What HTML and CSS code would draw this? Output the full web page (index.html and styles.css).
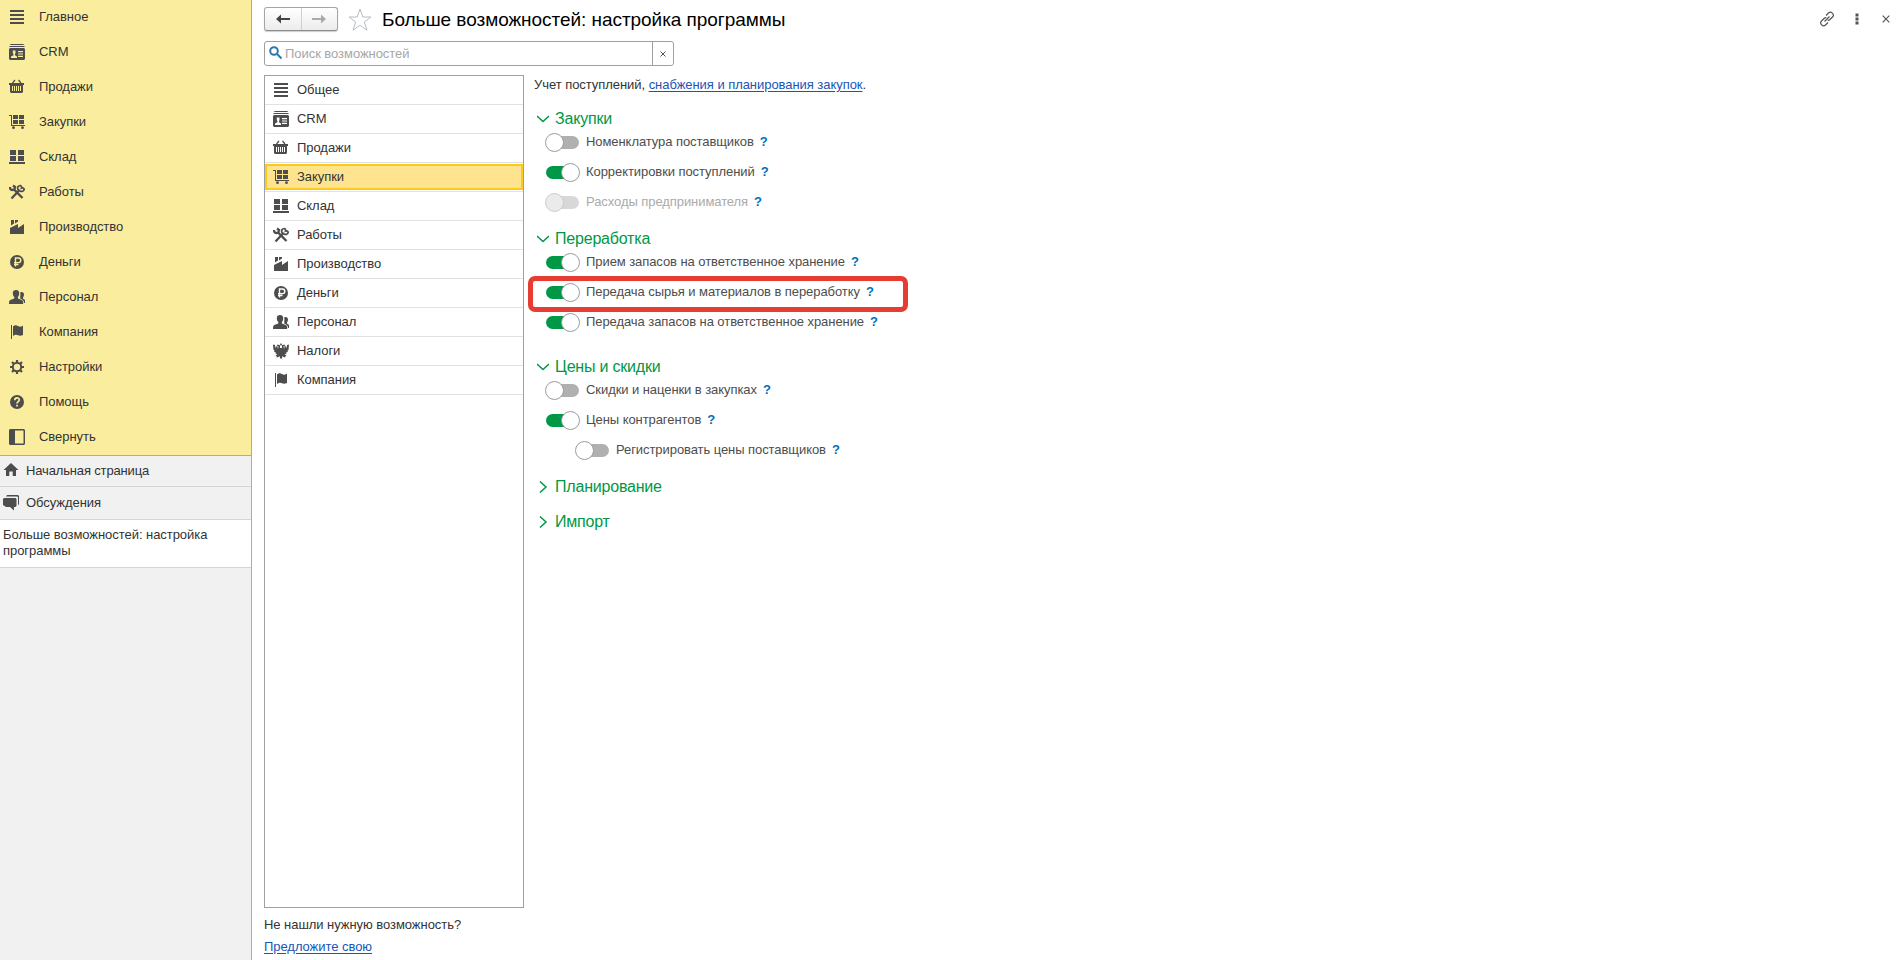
FILE: index.html
```html
<!DOCTYPE html>
<html lang="ru">
<head>
    <meta charset="UTF-8">
    <meta name="viewport" content="width=device-width, initial-scale=1.0">
    <title>Больше возможностей: настройка программы</title>
    <link rel="stylesheet" href="styles.css">
</head>
<body>
    <svg class="sprite" width="0" height="0">
        <symbol id="i-menu" viewBox="0 0 16 16"><path d="M1 1h14v2H1zM1 5h14v2H1zM1 9h14v2H1zM1 13h14v2H1z"/></symbol>
        <symbol id="i-crm" viewBox="0 0 16 16"><path d="M2 0h12l1.500 1H.5zM1 2h14l1 1H0z"/><path fill-rule="evenodd" d="M1 4h14l1 1v10l-1 1H1l-1-1V5zM3.800 6.500v2.500l.7 1.200v1L2 12.500V14h6v-1.500L6 11.200v-1L6.500 9V6.500zM9 7v1.200h5V7zM9 9.400v1.200h5V9.400zM9 11.800V13h5v-1.200z"/></symbol>
        <symbol id="i-basket" viewBox="0 0 16 16"><path d="M3.500 4l2.500-3M12 4L9.500 1" fill="none" stroke="currentColor" stroke-width="1.200"/><path fill-rule="evenodd" d="M0 4h15v2h-1v7l-1 1H2l-1-1V6H0zM3 7v5h1V7zM5 7v5h1V7zM7 7v5h1V7zM9 7v5h1V7zM11 7v5h1V7z"/></symbol>
        <symbol id="i-cart" viewBox="0 0 16 16"><path d="M0 1h3v10h13v1H2V2H0zM4 1h5v4H4zM10 1h5v4h-5zM4 6h5v4H4zM10 6h5v4h-5z"/><circle cx="4.500" cy="13.700" r="1.400"/><circle cx="13.500" cy="13.700" r="1.400"/></symbol>
        <symbol id="i-stock" viewBox="0 0 16 16"><path d="M1 1h6v5H1zM9 1h6v5H9zM1 7h6v5H1zM9 7h6v5H9zM0 13h16v2H0z"/></symbol>
        <symbol id="i-tools" viewBox="0 0 16 16"><path d="M1 3c0 3 2 3.500 4 2.500L13.500 14M4 1.500L6 3 5.500 5" fill="none" stroke="currentColor" stroke-width="2.300"/><path d="M10 6.500L2.500 14.500" fill="none" stroke="currentColor" stroke-width="2.300"/><path d="M9 5.500c-1-2 .2-4 2.300-4 1.200.6 1.600 1.400 1.200 2.500 1.300-.5 2.200 0 2.700 1.200-.2 2-2.400 2.800-4.200 1.800z" fill="none" stroke="currentColor" stroke-width="1.700"/></symbol>
        <symbol id="i-factory" viewBox="0 0 16 16"><path d="M2 1h3v3.500L2 6.500zM6 1h3v1.500L6 4.500zM1 9l8-4v4l6-4v10H1z"/></symbol>
        <symbol id="i-money" viewBox="0 0 16 16"><circle cx="8" cy="8" r="7"/><path class="cut" d="M6.500 12.500V4h3a2.300 2.300 0 0 1 0 4.600H5M5 10.500h4.500" fill="none" stroke-width="1.400"/></symbol>
        <symbol id="i-people" viewBox="0 0 16 16"><path d="M3.800 4C3.800 2 5 1 7 1s3.200 1 3.200 3c0 2-.5 3-1.300 4v1.500l4 1.500c1 .5 1.300 1.500 1.300 4H0c0-2.500.3-3.500 1.300-4l4-1.500V8C4.300 7 3.800 6 3.800 4z"/><path d="M11.200 3.500c2-1 3.800 0 3.800 2 0 1.500-.6 2.200-1 3v1l2 1.500v3h-1c-.2-2.500-1.300-3.500-3.700-4.200V8.500c-.3-1 .5-3-.1-5z"/></symbol>
        <symbol id="i-flag" viewBox="0 0 16 16"><path d="M2 1h1v14H2zM4 2.500C6 .5 7.500 1 9 2s3 1 5-.5V11c-2 1-3.500 1-5 .3S6 10.500 4 12z"/></symbol>
        <symbol id="i-gear" viewBox="0 0 16 16"><circle cx="8" cy="8" r="4.200" fill="none" stroke="currentColor" stroke-width="2"/><path d="M8 1v3M8 12v3M1 8h3M12 8h3M3 3l2.200 2.200M10.800 10.800L13 13M13 3l-2.200 2.200M5.200 10.800L3 13" stroke="currentColor" stroke-width="2.200"/></symbol>
        <symbol id="i-help" viewBox="0 0 16 16"><circle cx="8" cy="8" r="7"/><path class="cut" d="M5.800 6.200C5.800 3 10.300 3.200 10.300 5.800 10.300 7.500 8 7.600 8 9.500M8 10.800v1.800" fill="none" stroke-width="1.700"/></symbol>
        <symbol id="i-collapse" viewBox="0 0 16 16"><path fill-rule="evenodd" d="M1 0h14l1 1v14l-1 1H1l-1-1V1zM6 1.500v13h8.500v-13z"/></symbol>
        <symbol id="i-eagle" viewBox="0 0 16 16"><path d="M8 0l1 1.500L8 3 7 1.500zM4.500 1.500L7 2.300V5h2V2.300l2.500-.8.500 1.500-1.500.3L11 6l1-3.500L13.500 5 14 2l2-.5-.5 5.500-1 .5.300 1.500-1.800.5.500 1.500-2-.3 2 2.300-1.500.5.300 1-1.800-.5L9.500 13 9 15l-1 1-1-1-.5-2-1 1-1.800.5.300-1L2.500 13l2-2.300-2 .3L3 9.500 1.200 9l.3-1.500-1-.5L0 1.500 2 2l.5 3L4 2.500 5 6l.5-2.700L4 3z"/></symbol>
        <symbol id="i-home" viewBox="0 0 16 16"><path d="M8 1l7.500 7H13v6H9.700V9.500H6.300V14H3V8H.5z"/></symbol>
        <symbol id="i-chat" viewBox="0 0 16 16"><path d="M4 0h11l1 1v8l-1 1.500V2L14 1.500H3zM1 3h11.500l1 1v7l-1 1H11v3.500L7 12H3L0 10V4z"/></symbol>
    </svg>

    <aside class="sidebar">
        <nav class="main-menu">
            <a class="menu-item"><svg class="icon"><use href="#i-menu"/></svg>Главное</a>
            <a class="menu-item"><svg class="icon"><use href="#i-crm"/></svg>CRM</a>
            <a class="menu-item"><svg class="icon"><use href="#i-basket"/></svg>Продажи</a>
            <a class="menu-item"><svg class="icon"><use href="#i-cart"/></svg>Закупки</a>
            <a class="menu-item"><svg class="icon"><use href="#i-stock"/></svg>Склад</a>
            <a class="menu-item"><svg class="icon"><use href="#i-tools"/></svg>Работы</a>
            <a class="menu-item"><svg class="icon"><use href="#i-factory"/></svg>Производство</a>
            <a class="menu-item"><svg class="icon"><use href="#i-money"/></svg>Деньги</a>
            <a class="menu-item"><svg class="icon"><use href="#i-people"/></svg>Персонал</a>
            <a class="menu-item"><svg class="icon"><use href="#i-flag"/></svg>Компания</a>
            <a class="menu-item"><svg class="icon"><use href="#i-gear"/></svg>Настройки</a>
            <a class="menu-item"><svg class="icon"><use href="#i-help"/></svg>Помощь</a>
            <a class="menu-item"><svg class="icon"><use href="#i-collapse"/></svg>Свернуть</a>
        </nav>
        <div class="tab home"><svg class="icon"><use href="#i-home"/></svg>Начальная страница</div>
        <div class="tab chat"><svg class="icon"><use href="#i-chat"/></svg>Обсуждения</div>
        <div class="tab current">Больше возможностей: настройка программы</div>
    </aside>

    <main class="page">
        <header class="header">
            <div class="history">
                <button class="history-btn"><svg width="14" height="10" viewBox="0 0 14 10"><path d="M0 5l5-4.500V4h9v2H5v3.500z"/></svg></button>
                <button class="history-btn disabled"><svg width="14" height="10" viewBox="0 0 14 10"><path d="M14 5L9 .5V4H0v2h9v3.500z"/></svg></button>
            </div>
            <svg class="star" width="24" height="24" viewBox="0 0 24 24"><path d="M12 1l2.800 8h8.200l-6.600 5 2.500 8.200-6.900-5-6.900 5L7.600 14 1 9h8.200z"/></svg>
            <h1>Больше возможностей: настройка программы</h1>
            <div class="window-tools">
                <svg width="16" height="16" viewBox="0 0 16 16"><path d="M5.500 10.500l5-5M7 4.500l2.500-2.500c2.500-2.500 6.500 1.500 4 4L11 8.500c-.7.700-1.500.9-2.300.8M9 11.500L6.500 14c-2.500 2.500-6.500-1.500-4-4L5 7.500c.7-.7 1.500-.9 2.300-.8"/></svg>
                <svg class="dots" width="4" height="12" viewBox="0 0 4 12"><path d="M.5.500h3v3h-3zM.5 4.500h3v3h-3zM.5 8.500h3v3h-3z"/></svg>
                <svg width="8" height="8" viewBox="0 0 8 8"><path d="M.7.700l6.600 6.600M7.300.700L.7 7.300"/></svg>
            </div>
        </header>

        <div class="search">
            <svg class="magnifier" width="14" height="14" viewBox="0 0 14 14"><circle cx="5" cy="5" r="3.800"/><path d="M8 8l4.500 4.500"/></svg>
            <span class="placeholder">Поиск возможностей</span>
            <span class="clear"><svg width="6" height="6" viewBox="0 0 6 6"><path d="M.5.500l5 5M5.500.500l-5 5"/></svg></span>
        </div>

        <div class="content">
            <div class="left">
                <ul class="sections">
                    <li><svg class="icon"><use href="#i-menu"/></svg>Общее</li>
                    <li><svg class="icon"><use href="#i-crm"/></svg>CRM</li>
                    <li><svg class="icon"><use href="#i-basket"/></svg>Продажи</li>
                    <li class="selected"><div><svg class="icon"><use href="#i-cart"/></svg>Закупки</div></li>
                    <li><svg class="icon"><use href="#i-stock"/></svg>Склад</li>
                    <li><svg class="icon"><use href="#i-tools"/></svg>Работы</li>
                    <li><svg class="icon"><use href="#i-factory"/></svg>Производство</li>
                    <li><svg class="icon"><use href="#i-money"/></svg>Деньги</li>
                    <li><svg class="icon"><use href="#i-people"/></svg>Персонал</li>
                    <li><svg class="icon"><use href="#i-eagle"/></svg>Налоги</li>
                    <li><svg class="icon"><use href="#i-flag"/></svg>Компания</li>
                </ul>
                <p class="question">Не нашли нужную возможность?</p>
                <a class="link suggest">Предложите свою</a>
            </div>

            <div class="options">
                <p class="intro">Учет поступлений, <a class="link">снабжения и планирования закупок</a>.</p>

                <section class="group">
                    <h2><svg class="chevron"><path d="M0 3l6 5.500L12 3"/></svg>Закупки</h2>
                    <div class="option"><i class="switch"></i><span>Номенклатура поставщиков</span><b>?</b></div>
                    <div class="option"><i class="switch on"></i><span>Корректировки поступлений</span><b>?</b></div>
                    <div class="option disabled"><i class="switch"></i><span>Расходы предпринимателя</span><b>?</b></div>
                </section>

                <section class="group wide">
                    <h2><svg class="chevron"><path d="M0 3l6 5.500L12 3"/></svg>Переработка</h2>
                    <div class="option"><i class="switch on"></i><span>Прием запасов на ответственное хранение</span><b>?</b></div>
                    <div class="option marked"><i class="switch on"></i><span>Передача сырья и материалов в переработку</span><b>?</b></div>
                    <div class="option"><i class="switch on"></i><span>Передача запасов на ответственное хранение</span><b>?</b></div>
                </section>

                <section class="group">
                    <h2><svg class="chevron"><path d="M0 3l6 5.500L12 3"/></svg>Цены и скидки</h2>
                    <div class="option"><i class="switch"></i><span>Скидки и наценки в закупках</span><b>?</b></div>
                    <div class="option"><i class="switch on"></i><span>Цены контрагентов</span><b>?</b></div>
                    <div class="option nested"><i class="switch"></i><span>Регистрировать цены поставщиков</span><b>?</b></div>
                </section>

                <section class="group closed">
                    <h2><svg class="chevron"><path d="M3 .5L9 6l-6 5.500"/></svg>Планирование</h2>
                </section>
                <section class="group closed">
                    <h2><svg class="chevron"><path d="M3 .5L9 6l-6 5.500"/></svg>Импорт</h2>
                </section>
            </div>
        </div>
    </main>
</body>
</html>
```

FILE: styles.css
```css
*, *::before, *::after {
    box-sizing: border-box;
}
body {
    margin: 0;
    height: 100vh;
    display: flex;
    overflow: hidden;
    background: #fff;
    color: #333;
    font: 13px/16px "Liberation Sans", Arial, sans-serif;
    letter-spacing: -0.05px;
}
h1, h2, p, ul {
    margin: 0;
    padding: 0;
    font-weight: normal;
}
.sprite {
    position: absolute;
}
.icon {
    width: 16px;
    height: 16px;
    flex: none;
    color: #4d4d4d;
    fill: currentColor;
}
.cut {
    stroke: var(--cut, #fff);
}
.link {
    color: #1a55b8;
    text-decoration: underline;
    text-underline-offset: 2px;
}

/* левая панель */
.sidebar {
    width: 252px;
    flex: none;
    background: #f1f1f1;
    border-right: 1px solid #b9b25e;
}
.main-menu {
    --cut: #fbed9e;
    background: #fbed9e;
    border-bottom: 1px solid #b9b25e;
}
.menu-item {
    display: flex;
    align-items: center;
    gap: 14px;
    height: 35px;
    padding-left: 9px;
    padding-bottom: 1px;
}
.tab {
    display: flex;
    align-items: center;
    border-bottom: 1px solid #d5d5d5;
    padding-left: 3px;
    gap: 7px;
}
.home {
    height: 31px;
    letter-spacing: -0.15px;
}
.home .icon {
    margin-top: -2px;
}
.chat {
    height: 33px;
}
.chat .icon {
    margin-top: -1px;
}
.current {
    height: 48px;
    padding-bottom: 1px;
    background: #fff;
}

.page {
    flex: 1;
    display: flex;
    flex-direction: column;
    padding: 7px 8px 0 12px;
}
.header {
    display: flex;
    align-items: center;
    height: 25px;
}
.history {
    display: flex;
    width: 74px;
    height: 24px;
    margin-bottom: 1px;
    border: 1px solid #a5a5a5;
    border-bottom-color: #8c8c8c;
    border-radius: 3px;
    background: linear-gradient(#fff, #ececec);
    box-shadow: 0 1px 1px #ccc;
}
.history-btn {
    flex: 1;
    display: flex;
    align-items: center;
    justify-content: center;
    padding: 0;
    border: 0;
    background: none;
    fill: #444;
}
.history-btn.disabled {
    border-left: 1px solid #cfcfcf;
    fill: #aaa;
}
.star {
    margin: 0 10px 0 10px;
    fill: none;
    stroke: #b5bcc4;
}
h1 {
    color: #000;
    font-size: 19px;
    line-height: 24px;
}
.window-tools {
    display: flex;
    align-items: center;
    gap: 23px;
    margin-left: auto;
    margin-right: 4px;
    margin-bottom: 2px;
    fill: none;
    stroke: #555;
    stroke-width: 1.200;
}
.window-tools .dots {
    margin-left: -3px;
    fill: #555;
    stroke: none;
}

.search {
    display: flex;
    align-items: center;
    width: 410px;
    height: 25px;
    margin-top: 9px;
    padding-left: 4px;
    border: 1px solid #a0a0a0;
    border-radius: 3px;
}
.magnifier {
    margin-top: -1px;
    fill: none;
    stroke: #2f78ab;
    stroke-width: 2;
}
.placeholder {
    margin-left: 2px;
    color: #a6a6a6;
}
.clear {
    display: flex;
    align-items: center;
    justify-content: center;
    width: 21px;
    height: 23px;
    margin-left: auto;
    border-left: 1px solid #a0a0a0;
    stroke: #555;
}

.content {
    display: flex;
    margin-top: 9px;
}
.left {
    width: 260px;
}
.sections {
    height: 833px;
    border: 1px solid #a0a0a0;
    list-style: none;
}
.sections li {
    display: flex;
    align-items: center;
    gap: 8px;
    height: 29px;
    padding-left: 8px;
    border-bottom: 1px solid #e2e2e2;
}
.sections .selected {
    padding: 0;
}
.selected div {
    flex: 1;
    display: flex;
    align-items: center;
    gap: 8px;
    height: 26px;
    padding-left: 6px;
    border: 2px solid #fcc91f;
    background: #ffe48f;
}
.question {
    margin-top: 9px;
}
.suggest {
    display: block;
    margin-top: 6px;
}

.options {
    margin-left: 10px;
}
.intro {
    margin-top: 2px;
    margin-bottom: 18px;
}
.group {
    margin-bottom: 14px;
}
.group.wide {
    margin-bottom: 22px;
}
.group.closed {
    margin-bottom: 19px;
}
h2 {
    display: flex;
    align-items: center;
    height: 16px;
    color: #009846;
    font-size: 16px;
    letter-spacing: -0.2px;
}
.chevron {
    width: 12px;
    height: 12px;
    margin: 0 6px 0 3px;
    fill: none;
    stroke: #009846;
    stroke-width: 1.500;
}
.option {
    position: relative;
    display: flex;
    align-items: center;
    height: 30px;
    padding-left: 12px;
    color: #4d4d4d;
    letter-spacing: -0.07px;
}
.option b {
    margin-left: 6px;
    color: #0070ba;
    font-size: 13px;
}
.option.nested {
    padding-left: 42px;
}
.option.disabled {
    color: #aaa;
}
/* рамка вокруг нужного пункта */
.marked::after {
    content: "";
    position: absolute;
    left: -6px;
    top: -1px;
    width: 380px;
    height: 36px;
    border: 5px solid #e63c31;
    border-radius: 7px;
}
.switch {
    position: relative;
    width: 33px;
    height: 13px;
    margin-top: 1px;
    margin-right: 7px;
    border-radius: 7px;
    background: #b0b0b0;
}
.switch::before {
    content: "";
    position: absolute;
    left: -1px;
    top: -3px;
    width: 19px;
    height: 19px;
    border: 1px solid #9c9c9c;
    border-radius: 50%;
    background: #fff;
}
.switch.on {
    background: #009846;
}
.switch.on::before {
    left: 15px;
}
.disabled .switch {
    background: #d8d8d8;
}
.disabled .switch::before {
    background: #ebebeb;
    border-color: #ccc;
}
```
